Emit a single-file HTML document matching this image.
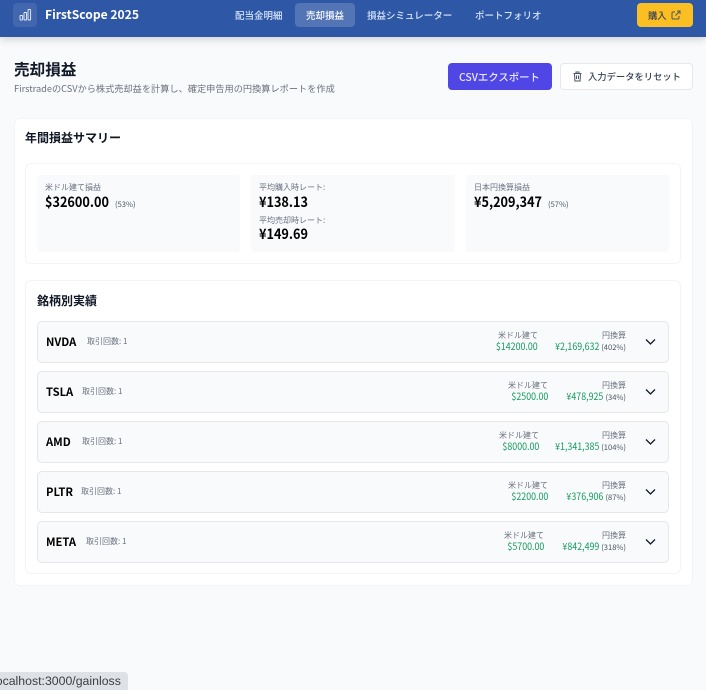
<!DOCTYPE html>
<html lang="ja"><head><meta charset="utf-8"><title>FirstScope 2025</title>
<style>
*{box-sizing:border-box;margin:0;padding:0}
html,body{width:706px;height:690px;overflow:hidden}
body{background:#f9fafb;font-family:"Noto Sans CJK JP","Liberation Sans",sans-serif;color:#000;position:relative}
.a{position:absolute;white-space:nowrap;line-height:1}
.box{position:absolute}
.nav{position:absolute;top:0;left:0;width:706px;height:37px;background:#2e57a5;box-shadow:0 2px 8px rgba(0,0,0,.18)}
.n{color:#d6e6fb;font-size:9.5px;font-weight:500;top:11px}
.card{position:absolute;background:#fff;border:1px solid #f3f4f6;border-radius:6px}
.stat{position:absolute;top:175px;height:77px;background:#f9fafb;border-radius:3px}
.lb{font-size:8px;color:#6b7280}
.big{font-size:14px;font-weight:700;color:#000;transform:scaleX(.905);transform-origin:0 50%}
.sm{font-size:7.6px;color:#4b5563}
.row{position:absolute;left:37px;width:632px;height:42px;background:#f9fafb;border:1px solid #e5e7eb;border-radius:5px}
.tk{font-size:11.2px;font-weight:700;color:#000}
.cnt{font-size:8px;color:#6b7280}
.g{font-size:9.7px;color:#129a5e;transform:scaleX(.915);transform-origin:100% 50%}
</style></head><body>
<div class="nav"></div>
<div class="box" style="left:13px;top:3px;width:24px;height:24px;background:#4367ae;border-radius:4px"></div>
<svg class="box" style="left:19px;top:8px" width="13" height="13" viewBox="0 0 13 13" fill="none" stroke="#e8f0fb" stroke-width=".9"><rect x="1" y="7.5" width="2.6" height="4.5" rx=".6"/><rect x="5" y="4.5" width="2.6" height="7.5" rx=".6"/><rect x="9" y="1.5" width="2.6" height="10.5" rx=".6"/></svg>
<div class="a" style="left:45px;top:9px;font-size:12.1px;font-weight:700;color:#fff">FirstScope 2025</div>
<div class="a n" style="left:235px">配当金明細</div>
<div class="box" style="left:295px;top:3px;width:60px;height:24px;background:#5375b5;border-radius:4px"></div>
<div class="a n" style="left:306px;color:#fff">売却損益</div>
<div class="a n" style="left:367px">損益シミュレーター</div>
<div class="a n" style="left:475px">ポートフォリオ</div>
<div class="box" style="left:637px;top:3px;width:56px;height:24px;background:#fbbf24;border-radius:4px"></div>
<div class="a" style="left:648px;top:11px;font-size:9.3px;font-weight:500;color:#374151">購入</div>
<svg class="box" style="left:671px;top:10px" width="10" height="10" viewBox="0 0 10 10" fill="none" stroke="#4b5563" stroke-width="1"><path d="M4 2H2a1 1 0 0 0-1 1v5a1 1 0 0 0 1 1h5a1 1 0 0 0 1-1V6M6 1h3v3M9 1 4.5 5.5"/></svg>

<div class="a" style="left:14px;top:62px;font-size:15.6px;font-weight:700;color:#111827">売却損益</div>
<div class="a" style="left:14px;top:84px;font-size:9.2px;color:#6b7280">FirstradeのCSVから株式売却益を計算し、確定申告用の円換算レポートを作成</div>
<div class="box" style="left:448px;top:63px;width:104px;height:27px;background:#4f46e5;border-radius:4px"></div>
<div class="a" style="left:459px;top:72px;font-size:10.4px;font-weight:500;color:#e8e8fc">CSVエクスポート</div>
<div class="box" style="left:560px;top:63px;width:133px;height:27px;background:#fff;border:1px solid #e5e7eb;border-radius:4px"></div>
<svg class="box" style="left:573px;top:71px" width="9" height="11" viewBox="0 0 9 11" fill="none" stroke="#4b5563" stroke-width="1"><path d="M.5 2.5h8M3 2.5V1h3v1.5M1.5 2.5l.4 7.5h5.2l.4-7.5M3.5 4.5v3.5M5.5 4.5v3.5"/></svg>
<div class="a" style="left:588px;top:72px;font-size:9.3px;font-weight:500;color:#374151">入力データをリセット</div>

<div class="card" style="left:14px;top:118px;width:679px;height:468px"></div>
<div class="a" style="left:25px;top:132px;font-size:12px;font-weight:700;color:#111827">年間損益サマリー</div>
<div class="card" style="left:25px;top:163px;width:656px;height:101px"></div>
<div class="stat" style="left:37px;width:203px"></div>
<div class="stat" style="left:251px;width:204px"></div>
<div class="stat" style="left:466px;width:203px"></div>
<div class="a lb" style="left:45px;top:184px">米ドル建て損益</div>
<div class="a big" style="left:45px;top:195px">$32600.00</div>
<div class="a sm" style="left:115px;top:201px">(53%)</div>
<div class="a lb" style="left:259px;top:184px">平均購入時レート:</div>
<div class="a big" style="left:259px;top:195px">¥138.13</div>
<div class="a lb" style="left:259px;top:217px">平均売却時レート:</div>
<div class="a big" style="left:259px;top:227px">¥149.69</div>
<div class="a lb" style="left:474px;top:184px">日本円換算損益</div>
<div class="a big" style="left:474px;top:195px">¥5,209,347</div>
<div class="a sm" style="left:548px;top:201px">(57%)</div>

<div class="card" style="left:25px;top:280px;width:656px;height:294px"></div>
<div class="a" style="left:37px;top:295px;font-size:12px;font-weight:700;color:#111827">銘柄別実績</div>

<div class="row" style="top:321px"></div>
<div class="a tk" style="left:46px;top:337px">NVDA</div><div class="a cnt" style="left:87px;top:338px">取引回数: 1</div>
<div class="a lb" style="right:168px;top:332px">米ドル建て</div><div class="a g" style="right:168px;top:342px">$14200.00</div>
<div class="a lb" style="right:80px;top:332px">円換算</div><div class="a g" style="right:107px;top:342px">¥2,169,632</div><div class="a sm" style="right:80px;top:344px">(402%)</div>
<svg class="box" style="left:645px;top:338px" width="11" height="8" viewBox="0 0 11 8" fill="none" stroke="#111827" stroke-width="1.3"><path d="M1 1.5 5.5 6 10 1.5"/></svg>

<div class="row" style="top:371px"></div>
<div class="a tk" style="left:46px;top:387px">TSLA</div><div class="a cnt" style="left:82px;top:388px">取引回数: 1</div>
<div class="a lb" style="right:158px;top:382px">米ドル建て</div><div class="a g" style="right:158px;top:392px">$2500.00</div>
<div class="a lb" style="right:80px;top:382px">円換算</div><div class="a g" style="right:103px;top:392px">¥478,925</div><div class="a sm" style="right:80px;top:394px">(34%)</div>
<svg class="box" style="left:645px;top:388px" width="11" height="8" viewBox="0 0 11 8" fill="none" stroke="#111827" stroke-width="1.3"><path d="M1 1.5 5.5 6 10 1.5"/></svg>

<div class="row" style="top:421px"></div>
<div class="a tk" style="left:46px;top:437px">AMD</div><div class="a cnt" style="left:82px;top:438px">取引回数: 1</div>
<div class="a lb" style="right:167px;top:432px">米ドル建て</div><div class="a g" style="right:167px;top:442px">$8000.00</div>
<div class="a lb" style="right:80px;top:432px">円換算</div><div class="a g" style="right:107px;top:442px">¥1,341,385</div><div class="a sm" style="right:80px;top:444px">(104%)</div>
<svg class="box" style="left:645px;top:438px" width="11" height="8" viewBox="0 0 11 8" fill="none" stroke="#111827" stroke-width="1.3"><path d="M1 1.5 5.5 6 10 1.5"/></svg>

<div class="row" style="top:471px"></div>
<div class="a tk" style="left:46px;top:487px">PLTR</div><div class="a cnt" style="left:81px;top:488px">取引回数: 1</div>
<div class="a lb" style="right:158px;top:482px">米ドル建て</div><div class="a g" style="right:158px;top:492px">$2200.00</div>
<div class="a lb" style="right:80px;top:482px">円換算</div><div class="a g" style="right:103px;top:492px">¥376,906</div><div class="a sm" style="right:80px;top:494px">(87%)</div>
<svg class="box" style="left:645px;top:488px" width="11" height="8" viewBox="0 0 11 8" fill="none" stroke="#111827" stroke-width="1.3"><path d="M1 1.5 5.5 6 10 1.5"/></svg>

<div class="row" style="top:521px"></div>
<div class="a tk" style="left:46px;top:537px">META</div><div class="a cnt" style="left:86px;top:538px">取引回数: 1</div>
<div class="a lb" style="right:162px;top:532px">米ドル建て</div><div class="a g" style="right:162px;top:542px">$5700.00</div>
<div class="a lb" style="right:80px;top:532px">円換算</div><div class="a g" style="right:107px;top:542px">¥842,499</div><div class="a sm" style="right:80px;top:544px">(318%)</div>
<svg class="box" style="left:645px;top:538px" width="11" height="8" viewBox="0 0 11 8" fill="none" stroke="#111827" stroke-width="1.3"><path d="M1 1.5 5.5 6 10 1.5"/></svg>

<div class="box" style="left:0;top:672px;width:128px;height:18px;background:#dee1e6;border-top-right-radius:4px;overflow:hidden"><div class="a" style="left:-7px;top:3px;font-family:'Liberation Sans',sans-serif;font-size:12.3px;color:#3c4043">localhost:3000/gainloss</div></div>
</body></html>
